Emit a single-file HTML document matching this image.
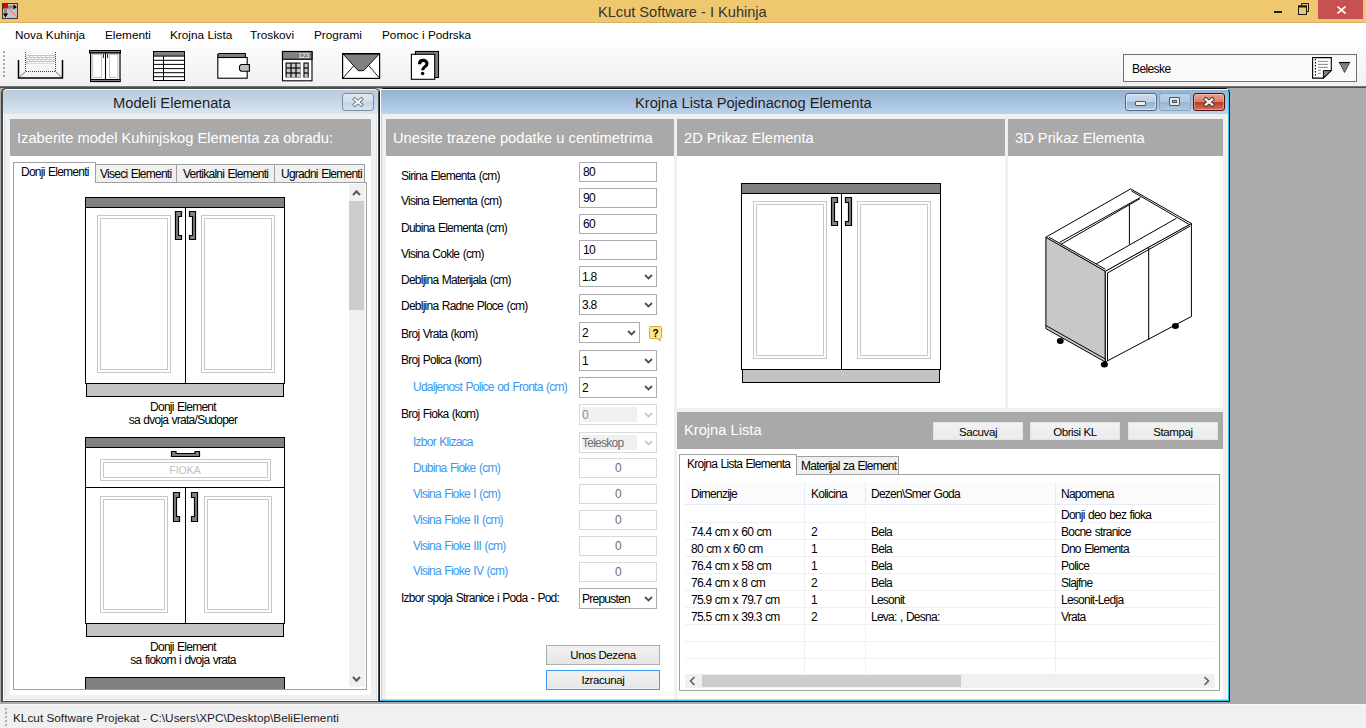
<!DOCTYPE html>
<html><head><meta charset="utf-8">
<style>
*{margin:0;padding:0;box-sizing:border-box}
html,body{width:1366px;height:728px;overflow:hidden;background:#ababab;font-family:"Liberation Sans",sans-serif;position:relative}
.a{position:absolute}
.t{position:absolute;white-space:pre;line-height:1}
.ms{font-size:12px;letter-spacing:-0.75px;word-spacing:0.8px;color:#000}
.mi{font-size:11.8px;color:#000;top:30px}
.hdr{position:absolute;background:#a9a9a9}
.hdr span{position:absolute;white-space:pre;line-height:1;color:#fff;font-size:14.7px}
.tb{position:absolute;background:#fff;border:1px solid #abadb3;height:20px;width:78px}
.tb span{position:absolute;left:3px;top:3px}
.cb{position:absolute;background:#fff;border:1px solid #acacac;height:21px;width:78px}
.cb span{position:absolute;left:2px;top:4px}
.chev{position:absolute;right:3px;top:7px;width:9px;height:6px}
.dis{border-color:#d9d9d9}
.lbl{position:absolute;white-space:pre;line-height:1;font-size:12px;letter-spacing:-0.75px;word-spacing:0.8px;color:#000;left:401px}
.blu{color:#3898f0;left:413px}
.btn{position:absolute;border:1px solid #adadad;background:linear-gradient(#f2f2f2,#e5e5e5);text-align:center}
.btn span{position:absolute;left:0;right:0;white-space:pre;line-height:1;font-size:11.5px;letter-spacing:-0.4px}
</style></head><body>
<svg width="0" height="0" style="position:absolute"><defs>
<g id="cab2d">
    <rect x="0.5" y="0.5" width="199" height="10" fill="#808080" stroke="#000"/>
    <rect x="0.5" y="10.5" width="199" height="176" fill="#fff" stroke="#000"/>
    <rect x="1.5" y="186.5" width="197" height="13" fill="#c3c3c3" stroke="#000"/>
    <line x1="100.5" y1="10.5" x2="100.5" y2="186.5" stroke="#000"/>
    <rect x="12.5" y="18.5" width="73" height="157" fill="none" stroke="#c8c8c8"/>
    <rect x="15.5" y="21.5" width="67" height="151" fill="none" stroke="#c8c8c8"/>
    <rect x="116.5" y="18.5" width="73" height="157" fill="none" stroke="#c8c8c8"/>
    <rect x="119.5" y="21.5" width="67" height="151" fill="none" stroke="#c8c8c8"/>
    <path d="M90.5 14.5H96.5V19.5H93.5V38.5H96.5V42.5H90.5Z" fill="#808080" stroke="#000" stroke-width="1.2"/>
    <path d="M110.5 14.5H104.5V19.5H107.5V38.5H104.5V42.5H110.5Z" fill="#808080" stroke="#000" stroke-width="1.2"/>
</g></defs></svg>

<!-- ===== TITLE BAR ===== -->
<div class="a" style="left:0;top:0;width:1366px;height:23px;background:#efc76e;border-bottom:1px solid #d8b061"></div>
<svg class="a" style="left:2px;top:3px" width="16" height="16" viewBox="0 0 16 16">
  <rect x="0.5" y="0.5" width="15" height="15" fill="#c4c4c4" stroke="#3a3a3a"/>
  <rect x="1" y="1" width="5" height="4.5" fill="#e80000"/>
  <rect x="1" y="1" width="1" height="4.5" fill="#800080"/>
  <path d="M6 4.5L15 14.5" stroke="#ff5050" stroke-width="0.8"/>
  <rect x="6" y="2.5" width="6" height="3" fill="#8a8a8a"/>
  <path d="M11.5 1.5L15 4L11.5 6.5Z" fill="#000"/>
  <rect x="2" y="5.5" width="3" height="6" fill="#8a8a8a"/>
  <path d="M1 10.5L3.5 14.5L6 10.5Z" fill="#000"/>
</svg>
<div class="t" style="left:598px;top:5px;font-size:14.6px;color:#333">KLcut Software - I Kuhinja</div>
<div class="a" style="left:1274px;top:11px;width:8px;height:2px;background:#1a1a1a"></div>
<svg class="a" style="left:1298px;top:3px" width="12" height="12" viewBox="0 0 12 12">
  <path d="M3.5 2.5V0.5H10.5V8.5H8.5" fill="none" stroke="#1a1a1a" stroke-width="1"/>
  <rect x="0.5" y="3" width="8" height="8.5" fill="none" stroke="#1a1a1a" stroke-width="1"/>
  <rect x="0" y="2.5" width="9" height="2" fill="#1a1a1a"/>
</svg>
<div class="a" style="left:1318px;top:0;width:45px;height:19px;background:#c75050"></div>
<svg class="a" style="left:1337px;top:6px" width="9" height="8" viewBox="0 0 9 8">
  <path d="M0.5 0.5L8.5 7.5M8.5 0.5L0.5 7.5" stroke="#fff" stroke-width="1.6"/>
</svg>

<!-- ===== MENU ===== -->
<div class="a" style="left:0;top:23px;width:1366px;height:24px;background:#fff"></div>
<div class="t mi" style="left:15px">Nova Kuhinja</div>
<div class="t mi" style="left:105px">Elementi</div>
<div class="t mi" style="left:170px">Krojna Lista</div>
<div class="t mi" style="left:250px">Troskovi</div>
<div class="t mi" style="left:314px">Programi</div>
<div class="t mi" style="left:382px">Pomoc i Podrska</div>

<!-- ===== TOOLBAR ===== -->
<div class="a" style="left:0;top:47px;width:1366px;height:39px;background:linear-gradient(#fbfbfb,#f6f6f6 50%,#f0f0f0)"></div>
<div class="a" style="left:0;top:86px;width:1366px;height:2px;background:linear-gradient(#8a8a8a,#3a3a3a)"></div>
<!-- grip -->
<svg class="a" style="left:3px;top:50px" width="3" height="28" viewBox="0 0 3 28"><g fill="#a8a8a8"><rect x="0" y="1" width="2" height="2"/><rect x="0" y="5" width="2" height="2"/><rect x="0" y="9" width="2" height="2"/><rect x="0" y="13" width="2" height="2"/><rect x="0" y="17" width="2" height="2"/><rect x="0" y="21" width="2" height="2"/><rect x="0" y="25" width="2" height="2"/></g></svg>
<svg class="a" style="left:0;top:47px" width="470" height="38" viewBox="0 47 470 38">
  <!-- icon1 room -->
  <rect x="26" y="55" width="29.5" height="8.6" fill="#c4c4c4"/>
  <g stroke="#fff" stroke-width="1" stroke-dasharray="3.2 0.8">
    <line x1="26" y1="56.5" x2="55.5" y2="56.5"/>
    <line x1="27.5" y1="58.5" x2="55.5" y2="58.5"/>
    <line x1="26" y1="60.5" x2="55.5" y2="60.5"/>
    <line x1="27.5" y1="62.5" x2="55.5" y2="62.5"/>
  </g>
  <g stroke="#404040" stroke-width="1" stroke-dasharray="1 1" fill="none">
    <path d="M25.5 52V71.5H55.5V52"/>
  </g>
  <path d="M19.5 77L25.5 71.5M61.5 77L55.5 71.5" stroke="#555" stroke-width="0.8"/>
  <path d="M18.5 60V78H62.5V60" fill="none" stroke="#000" stroke-width="1.5"/>
  <!-- icon2 cabinet -->
  <rect x="89.5" y="50.5" width="31" height="2.5" fill="#808080" stroke="#000" stroke-width="1"/>
  <rect x="90.6" y="53" width="29.4" height="28.5" fill="#fff" stroke="#000" stroke-width="1.2"/>
  <rect x="90.6" y="79.5" width="29.4" height="2" fill="#808080" stroke="#000" stroke-width="1"/>
  <line x1="105.5" y1="53" x2="105.5" y2="79.5" stroke="#000" stroke-width="1.1"/>
  <rect x="92.7" y="54.5" width="8.8" height="23" fill="none" stroke="#c4c4c4" stroke-width="1"/>
  <rect x="109.5" y="54.5" width="8.3" height="23" fill="none" stroke="#c4c4c4" stroke-width="1"/>
  <line x1="103.4" y1="54" x2="103.4" y2="58" stroke="#000" stroke-width="0.9"/>
  <line x1="107.6" y1="54" x2="107.6" y2="58" stroke="#000" stroke-width="0.9"/>
  <!-- icon3 table -->
  <rect x="153.5" y="51.5" width="31" height="29" fill="#fff" stroke="#000" stroke-width="1"/>
  <rect x="153.5" y="51.5" width="31" height="4.6" fill="#808080" stroke="#000" stroke-width="1"/>
  <g stroke="#000" stroke-width="1">
    <line x1="153.5" y1="60.3" x2="184.5" y2="60.3"/>
    <line x1="153.5" y1="64.4" x2="184.5" y2="64.4"/>
    <line x1="153.5" y1="68.6" x2="184.5" y2="68.6"/>
    <line x1="153.5" y1="72.7" x2="184.5" y2="72.7"/>
    <line x1="153.5" y1="76.7" x2="184.5" y2="76.7"/>
    <line x1="163.5" y1="56" x2="163.5" y2="80.5"/>
  </g>
  <!-- icon4 wallet -->
  <path d="M217.8 57.5V54.6L219 53.5H245.4V57.5" fill="#808080" stroke="#000" stroke-width="1.1"/>
  <rect x="217.8" y="57.5" width="29.4" height="20.7" fill="#fff" stroke="#000" stroke-width="1.1"/>
  <path d="M241 64.5H249.4V71.2H241L239.5 69.5V66.2Z" fill="#c0c0c0" stroke="#000" stroke-width="1.1"/>
  <!-- icon5 calculator -->
  <rect x="282.5" y="51.5" width="29.5" height="29.3" fill="#fff" stroke="#000" stroke-width="1.1"/>
  <rect x="282.5" y="51.5" width="29.5" height="7.8" fill="#808080" stroke="#000" stroke-width="1.1"/>
  <text x="309" y="58.2" font-family="Liberation Sans" font-size="7" fill="#fff" text-anchor="end" letter-spacing="-0.3">123</text>
  <rect x="285.5" y="62.5" width="15" height="15" fill="#000"/>
  <rect x="303.4" y="62.5" width="5.3" height="15" fill="#000"/>
  <g fill="#c8c8c8">
    <rect x="286.6" y="63.6" width="3.8" height="3.8"/><rect x="291.6" y="63.6" width="3.8" height="3.8"/><rect x="296.6" y="63.6" width="3.8" height="3.8"/>
    <rect x="286.6" y="68.6" width="3.8" height="3.8"/><rect x="291.6" y="68.6" width="3.8" height="3.8"/><rect x="296.6" y="68.6" width="3.8" height="3.8"/>
    <rect x="286.6" y="73.6" width="3.8" height="3.8"/><rect x="291.6" y="73.6" width="3.8" height="3.8"/><rect x="296.6" y="73.6" width="3.8" height="3.8"/>
    <rect x="304.5" y="63.6" width="3.2" height="3.8"/><rect x="304.5" y="68.6" width="3.2" height="3.8"/><rect x="304.5" y="73.6" width="3.2" height="3.8"/>
  </g>
  <!-- icon6 envelope -->
  <rect x="342.6" y="53.6" width="37" height="24.8" fill="#fff" stroke="#000" stroke-width="1.2"/>
  <path d="M343.2 54.2H379L363.6 70.7H358.2Z" fill="#808080" stroke="#000" stroke-width="0.9"/>
  <path d="M343 78L353.5 66M379.5 78L369 66" stroke="#000" stroke-width="0.9"/>
  <!-- icon7 help -->
  <rect x="415.5" y="51.5" width="23" height="26" fill="#808080" stroke="#000" stroke-width="1.1"/>
  <rect x="411.4" y="54.3" width="23.3" height="25" fill="#fff" stroke="#000" stroke-width="1.1"/>
  <path d="M419.5 64.3C419.5 61.8 421.2 60.4 423.3 60.4C425.5 60.4 427 61.9 427 63.8C427 66.3 423.3 66.8 422.8 69.5V70.3" fill="none" stroke="#000" stroke-width="3.1"/><circle cx="422.6" cy="73.5" r="1.8" fill="#000"/>
</svg>
<!-- Beleske -->
<div class="a" style="left:1123px;top:54px;width:234px;height:28px;border:1px solid #707070;background:#f9f9f9"></div>
<div class="t" style="left:1132px;top:63px;font-size:12px;letter-spacing:-0.6px;color:#000">Beleske</div>
<svg class="a" style="left:1310px;top:55px" width="45" height="26" viewBox="1310 55 45 26">
  <path d="M1312.6 57.6H1331.3V70.6L1323.4 78.1H1312.6Z" fill="#fff" stroke="#000" stroke-width="1.1"/>
  <path d="M1323.4 78.1V70.6H1331.3Z" fill="#808080" stroke="#000" stroke-width="1"/>
  <line x1="1315.4" y1="59" x2="1315.4" y2="77" stroke="#000" stroke-width="1.1" stroke-dasharray="1.6 1.4"/>
  <g stroke="#808080" stroke-width="0.9"><line x1="1318" y1="61.4" x2="1328" y2="61.4"/><line x1="1318" y1="64.4" x2="1328" y2="64.4"/><line x1="1318" y1="67.4" x2="1328" y2="67.4"/><line x1="1318" y1="70.4" x2="1321" y2="70.4"/><line x1="1318" y1="73.4" x2="1321" y2="73.4"/></g>
  <path d="M1339.3 62.4H1349.8L1344.5 72.6Z" fill="#808080" stroke="#000" stroke-width="0.9" stroke-dasharray="1.2 0.8"/><line x1="1339" y1="62.6" x2="1350" y2="62.6" stroke="#000" stroke-width="1.1"/>
</svg>


<!-- ===== STATUS ===== -->
<div class="a" style="left:0;top:704px;width:1366px;height:1px;background:#f8f8f8"></div><div class="a" style="left:0;top:705px;width:1366px;height:23px;background:#f0f0f0"></div>
<svg class="a" style="left:4px;top:706px" width="4" height="20" viewBox="0 0 4 20"><g stroke="#a0a0a0" stroke-width="1.2"><path d="M1 4L3 2M1 8L3 6M1 12L3 10M1 16L3 14M1 20L3 18"/></g></svg>
<div class="t" style="left:13px;top:713px;font-size:11.8px;color:#1a1a2a">KLcut Software Projekat - C:\Users\XPC\Desktop\BeliElementi</div>

<!-- ===== LEFT WINDOW ===== -->
<div class="a" style="left:1px;top:88px;width:378px;height:614px;background:#4a4a4a;border-radius:5px 5px 0 0"></div>
<div class="a" style="left:3px;top:89px;width:375px;height:612px;background:#fff;border-radius:4px 4px 0 0"></div>
<div class="a" style="left:4px;top:114px;width:373px;height:586px;background:#d5e3f1"></div>
<div class="a" style="left:5px;top:114px;width:371px;height:585px;background:#f0f0f0"></div>
<div class="a" style="left:3px;top:90px;width:375px;height:24px;background:linear-gradient(#b8c9da,#d8e5f2);border-radius:4px 4px 0 0"></div>
<div class="t" style="left:113px;top:96px;font-size:14.7px;color:#1e1e1e">Modeli Elemenata</div>
<div class="a" style="left:342px;top:93px;width:32px;height:18px;border:1px solid #7d8ea3;border-radius:3px;background:linear-gradient(#dfe8f1,#d2dfec 48%,#c4d4e6 52%,#d6e3f0)"></div>
<svg class="a" style="left:351px;top:96px" width="14" height="12" viewBox="0 0 14 12"><path d="M3.8 3.3L10.2 8.7M10.2 3.3L3.8 8.7" stroke="#5a6270" stroke-width="3.6" stroke-linecap="square"/><path d="M3.8 3.3L10.2 8.7M10.2 3.3L3.8 8.7" stroke="#f6f6f6" stroke-width="2.1" stroke-linecap="square"/></svg>

<div class="hdr" style="left:10px;top:119px;width:361px;height:37px"><span style="left:7px;top:12px">Izaberite model Kuhinjskog Elementa za obradu:</span></div>
<div class="a" style="left:10px;top:156px;width:361px;height:539px;background:#fff"></div>
<!-- tab page -->
<div class="a" style="left:13px;top:182px;width:354px;height:508px;border:1px solid #a0a0a0;background:#fff"></div>
<!-- tabs -->
<div class="a" style="left:95px;top:164px;width:82px;height:18px;border:1px solid #a0a0a0;border-bottom:none;background:#f0f0f0"></div>
<div class="a" style="left:176px;top:164px;width:99px;height:18px;border:1px solid #a0a0a0;border-bottom:none;background:#f0f0f0"></div>
<div class="a" style="left:274px;top:164px;width:91px;height:18px;border:1px solid #a0a0a0;border-bottom:none;background:#f0f0f0"></div>
<div class="a" style="left:13px;top:162px;width:83px;height:21px;border:1px solid #a0a0a0;border-bottom:none;background:#fff"></div>
<div class="t ms" style="left:21px;top:166px">Donji Elementi</div>
<div class="t ms" style="left:100px;top:168px">Viseci Elementi</div>
<div class="t ms" style="left:183px;top:168px">Vertikalni Elementi</div>
<div class="t ms" style="left:281px;top:168px">Ugradni Elementi</div>
<!-- scrollbar -->
<div class="a" style="left:349px;top:184px;width:16px;height:503px;background:#f0f0f0"></div>
<div class="a" style="left:349px;top:201px;width:15px;height:109px;background:#cdcdcd"></div>
<svg class="a" style="left:352px;top:189px" width="9" height="8" viewBox="0 0 9 8"><path d="M1 6.2L4.5 2.3L8 6.2" fill="none" stroke="#555" stroke-width="2"/></svg>
<svg class="a" style="left:352px;top:675px" width="9" height="8" viewBox="0 0 9 8"><path d="M1 1.8L4.5 5.7L8 1.8" fill="none" stroke="#555" stroke-width="2"/></svg>
<!-- cabinets -->
<svg class="a" style="left:14px;top:183px" width="335" height="506" viewBox="0 0 335 506">
  <use href="#cab2d" x="71" y="14"/>
  <g transform="translate(71,254)">
    <rect x="0.5" y="0.5" width="199" height="10" fill="#808080" stroke="#000"/>
    <rect x="0.5" y="10.5" width="199" height="176" fill="#fff" stroke="#000"/>
    <rect x="1.5" y="186.5" width="197" height="13" fill="#c3c3c3" stroke="#000"/>
    <line x1="0.5" y1="50.5" x2="199.5" y2="50.5" stroke="#000"/>
    <line x1="100.5" y1="50.5" x2="100.5" y2="186.5" stroke="#000"/>
    <path d="M86.5 14.5H91V16.5H110V14.5H114.5V19.5H86.5Z" fill="#808080" stroke="#000" stroke-width="1.2"/>
    <rect x="15.5" y="22.5" width="170" height="21" fill="none" stroke="#c8c8c8"/>
    <rect x="18.5" y="25.5" width="164" height="15" fill="none" stroke="#c8c8c8"/>
    <text x="100" y="37" font-family="Liberation Sans" font-size="10.5" fill="#c0c0c0" text-anchor="middle">FIOKA</text>
    <rect x="15.5" y="59.5" width="67" height="116" fill="none" stroke="#c8c8c8"/>
    <rect x="18.5" y="62.5" width="61" height="110" fill="none" stroke="#c8c8c8"/>
    <rect x="119.5" y="59.5" width="67" height="116" fill="none" stroke="#c8c8c8"/>
    <rect x="122.5" y="62.5" width="61" height="110" fill="none" stroke="#c8c8c8"/>
    <path d="M88.5 55.5H94.5V60.5H91.5V79.5H94.5V84.5H88.5Z" fill="#808080" stroke="#000" stroke-width="1.2"/>
    <path d="M112.5 55.5H106.5V60.5H109.5V79.5H106.5V84.5H112.5Z" fill="#808080" stroke="#000" stroke-width="1.2"/>
  </g>
  <rect x="71.5" y="494.5" width="199" height="20" fill="#808080" stroke="#000"/>
</svg>
<div class="t ms" style="left:83px;width:200px;text-align:center;top:401px">Donji Element</div>
<div class="t ms" style="left:83px;width:200px;text-align:center;top:414px">sa dvoja vrata/Sudoper</div>
<div class="t ms" style="left:83px;width:200px;text-align:center;top:641px">Donji Element</div>
<div class="t ms" style="left:83px;width:200px;text-align:center;top:654px">sa fiokom i dvoja vrata</div>


<!-- ===== RIGHT WINDOW ===== -->
<div class="a" style="left:379px;top:88px;width:851px;height:614px;background:#111;border-radius:5px 5px 0 0"></div>
<div class="a" style="left:380px;top:89px;width:849px;height:612px;background:#34c6ee;border-radius:4px 4px 0 0"></div>
<div class="a" style="left:380px;top:89px;width:1px;height:611px;background:#fff"></div>
<div class="a" style="left:381px;top:114px;width:847px;height:586px;background:#b9d1ea"></div>
<div class="a" style="left:382px;top:114px;width:846px;height:585px;background:#f0f0f0"></div>
<div class="a" style="left:381px;top:89px;width:847px;height:1px;background:#fff"></div>
<div class="a" style="left:381px;top:90px;width:847px;height:24px;background:linear-gradient(#94b2d3,#bad3ec)"></div>
<div class="t" style="left:635px;top:96px;font-size:14.7px;color:#1e1e1e">Krojna Lista Pojedinacnog Elementa</div>
<!-- title buttons -->
<div class="a" style="left:1125px;top:93px;width:32px;height:18px;border:1px solid #56667c;border-radius:3px;background:linear-gradient(#cddcec,#bccfe4 48%,#97b3d1 52%,#b4cce5);box-shadow:inset 0 0 0 1px rgba(255,255,255,0.5)"></div>
<div class="a" style="left:1135px;top:101px;width:11px;height:5px;background:#f0f0f0;border:1px solid #4a5566;border-radius:1px"></div>
<div class="a" style="left:1159px;top:93px;width:32px;height:18px;border:1px solid #8aa4c0;border-radius:3px;background:linear-gradient(#bcd0e6,#b0c8e0 48%,#9ab6d4 52%,#b0cae4)"></div>
<div class="a" style="left:1169px;top:97px;width:11px;height:9px;background:#e8e8e8;border:1px solid #4a5566;border-radius:1px"></div>
<div class="a" style="left:1172px;top:100px;width:5px;height:3px;background:#9ab0c8;border:1px solid #4a5566"></div>
<div class="a" style="left:1193px;top:93px;width:32px;height:18px;border:1px solid #4a1016;border-radius:3px;background:linear-gradient(#eba593,#d97c66 48%,#b83c22 52%,#d0735a);box-shadow:inset 0 0 0 1px rgba(255,200,190,0.5)"></div>
<svg class="a" style="left:1202px;top:96px" width="14" height="12" viewBox="0 0 14 12"><path d="M3.8 3.3L10.2 8.7M10.2 3.3L3.8 8.7" stroke="#3a2a2a" stroke-width="3.8" stroke-linecap="square"/><path d="M3.8 3.3L10.2 8.7M10.2 3.3L3.8 8.7" stroke="#f4f4f4" stroke-width="2.3" stroke-linecap="square"/></svg>

<!-- headers -->
<div class="hdr" style="left:386px;top:119px;width:288px;height:37px"><span style="left:7px;top:12px">Unesite trazene podatke u centimetrima</span></div>
<div class="hdr" style="left:677px;top:119px;width:328px;height:37px"><span style="left:7px;top:12px">2D Prikaz Elementa</span></div>
<div class="hdr" style="left:1008px;top:119px;width:215px;height:37px"><span style="left:7px;top:12px">3D Prikaz Elementa</span></div>
<div class="a" style="left:386px;top:156px;width:288px;height:543px;background:#fff"></div>
<div class="a" style="left:677px;top:156px;width:328px;height:252px;background:#fff"></div>
<div class="a" style="left:1008px;top:156px;width:215px;height:252px;background:#fff"></div>
<div class="hdr" style="left:677px;top:412px;width:546px;height:37px"><span style="left:7px;top:11px">Krojna Lista</span></div>
<div class="a" style="left:677px;top:449px;width:546px;height:250px;background:#fff"></div>

<!-- form labels -->
<div class="lbl" style="top:170px">Sirina Elementa (cm)</div>
<div class="lbl" style="top:195px">Visina Elementa (cm)</div>
<div class="lbl" style="top:222px">Dubina Elementa (cm)</div>
<div class="lbl" style="top:248px">Visina Cokle (cm)</div>
<div class="lbl" style="top:274px">Debljina Materijala (cm)</div>
<div class="lbl" style="top:300px">Debljina Radne Ploce (cm)</div>
<div class="lbl" style="top:328px">Broj Vrata (kom)</div>
<div class="lbl" style="top:354px">Broj Polica (kom)</div>
<div class="lbl blu" style="top:381px">Udaljenost Police od Fronta (cm)</div>
<div class="lbl" style="top:408px">Broj Fioka (kom)</div>
<div class="lbl blu" style="top:436px">Izbor Klizaca</div>
<div class="lbl blu" style="top:462px">Dubina Fioke (cm)</div>
<div class="lbl blu" style="top:488px">Visina Fioke I (cm)</div>
<div class="lbl blu" style="top:514px">Visina Fioke II (cm)</div>
<div class="lbl blu" style="top:540px">Visina Fioke III (cm)</div>
<div class="lbl blu" style="top:565px">Visina Fioke IV (cm)</div>
<div class="lbl" style="top:592px">Izbor spoja Stranice i Poda - Pod:</div>

<!-- inputs -->
<div class="tb" style="left:579px;top:162px"><span class="t ms">80</span></div>
<div class="tb" style="left:579px;top:188px"><span class="t ms">90</span></div>
<div class="tb" style="left:579px;top:214px"><span class="t ms">60</span></div>
<div class="tb" style="left:579px;top:240px"><span class="t ms">10</span></div>
<div class="cb" style="left:579px;top:266px"><span class="t ms">1.8</span><svg class="chev" viewBox="0 0 9 6"><path d="M1 1L4.5 4.5L8 1" fill="none" stroke="#505050" stroke-width="1.8"/></svg></div>
<div class="cb" style="left:579px;top:294px"><span class="t ms">3.8</span><svg class="chev" viewBox="0 0 9 6"><path d="M1 1L4.5 4.5L8 1" fill="none" stroke="#505050" stroke-width="1.8"/></svg></div>
<div class="cb" style="left:579px;top:322px;width:61px"><span class="t ms">2</span><svg class="chev" viewBox="0 0 9 6"><path d="M1 1L4.5 4.5L8 1" fill="none" stroke="#505050" stroke-width="1.8"/></svg></div>
<svg class="a" style="left:649px;top:326px" width="13" height="16" viewBox="0 0 13 16">
  <path d="M1.5 0.5H11.5Q12.5 0.5 12.5 1.5V11.5Q12.5 12.5 11.5 12.5H10.5L11.5 15L8 12.5H1.5Q0.5 12.5 0.5 11.5V1.5Q0.5 0.5 1.5 0.5Z" fill="#fbe98a" stroke="#d8a640"/>
  <text x="6.5" y="10.5" font-family="Liberation Sans" font-size="10" font-weight="bold" text-anchor="middle" fill="#000">?</text>
</svg>
<div class="cb" style="left:579px;top:350px"><span class="t ms">1</span><svg class="chev" viewBox="0 0 9 6"><path d="M1 1L4.5 4.5L8 1" fill="none" stroke="#505050" stroke-width="1.8"/></svg></div>
<div class="cb" style="left:579px;top:377px"><span class="t ms">2</span><svg class="chev" viewBox="0 0 9 6"><path d="M1 1L4.5 4.5L8 1" fill="none" stroke="#505050" stroke-width="1.8"/></svg></div>
<div class="cb dis" style="left:579px;top:404px"><div class="a" style="left:2px;top:2px;width:55px;height:15px;background:#f0f0f0"></div><span class="t ms" style="color:#8d8d8d">0</span><svg class="chev" viewBox="0 0 9 6"><path d="M1 1L4.5 4.5L8 1" fill="none" stroke="#bfbfbf" stroke-width="1.6"/></svg></div>
<div class="cb dis" style="left:579px;top:432px"><div class="a" style="left:2px;top:2px;width:55px;height:15px;background:#f0f0f0"></div><span class="t ms" style="color:#6d6d6d">Teleskop</span><svg class="chev" viewBox="0 0 9 6"><path d="M1 1L4.5 4.5L8 1" fill="none" stroke="#bfbfbf" stroke-width="1.6"/></svg></div>
<div class="tb dis" style="left:579px;top:458px"><span class="t ms" style="left:0;right:0;text-align:center;color:#6d6d6d">0</span></div>
<div class="tb dis" style="left:579px;top:484px"><span class="t ms" style="left:0;right:0;text-align:center;color:#6d6d6d">0</span></div>
<div class="tb dis" style="left:579px;top:510px"><span class="t ms" style="left:0;right:0;text-align:center;color:#6d6d6d">0</span></div>
<div class="tb dis" style="left:579px;top:536px"><span class="t ms" style="left:0;right:0;text-align:center;color:#6d6d6d">0</span></div>
<div class="tb dis" style="left:579px;top:562px"><span class="t ms" style="left:0;right:0;text-align:center;color:#6d6d6d">0</span></div>
<div class="cb" style="left:579px;top:588px"><span class="t ms">Prepusten</span><svg class="chev" viewBox="0 0 9 6"><path d="M1 1L4.5 4.5L8 1" fill="none" stroke="#505050" stroke-width="1.8"/></svg></div>

<div class="btn" style="left:546px;top:645px;width:114px;height:20px"><span style="top:4px">Unos Dezena</span></div>
<div class="btn" style="left:546px;top:670px;width:114px;height:20px;border-color:#3d9cf7;box-shadow:inset 0 0 0 1px #e6f0fa"><span style="top:4px">Izracunaj</span></div>

<!-- 2D cabinet -->
<svg class="a" style="left:741px;top:183px" width="201" height="201" viewBox="0 0 201 201"><use href="#cab2d"/></svg>

<!-- 3D cabinet -->
<svg class="a" style="left:1030px;top:180px" width="175" height="195" viewBox="0 0 175 195">
  <g stroke="#000" stroke-width="1" stroke-linejoin="round" fill="none">
    <polygon points="15.9,57.2 75.3,91.2 75.3,182 15.9,148.6" fill="#c8c8c8"/>
    <polygon points="75.3,91.2 161.4,43.5 161.4,136.5 75.3,182" fill="#fff"/>
    <polygon points="15.9,57.2 100.7,8.9 161.4,43.5 75.3,91.2" fill="#fff"/>
    <line x1="19" y1="57.2" x2="75.3" y2="89.2"/>
    <line x1="101.4" y1="10.9" x2="158.8" y2="44.2"/>
    <line x1="77.3" y1="93.1" x2="160.1" y2="46.1"/>
    <line x1="29.6" y1="62.4" x2="110.5" y2="17.4"/>
    <line x1="30.9" y1="64.4" x2="109.9" y2="18.7"/>
    <line x1="99.4" y1="24.6" x2="99.4" y2="64.4"/>
    <line x1="66.1" y1="84" x2="146.4" y2="38.3"/>
    <line x1="77.5" y1="93" x2="77.5" y2="181"/>
    <line x1="118.7" y1="67.7" x2="118.7" y2="160"/>
    <line x1="15.9" y1="145.5" x2="75.3" y2="179"/>
  </g>
  <ellipse cx="30.3" cy="161" rx="3.5" ry="3" fill="#000"/>
  <ellipse cx="74.4" cy="184.5" rx="3.5" ry="3" fill="#000"/>
  <ellipse cx="145.4" cy="146" rx="3.5" ry="3" fill="#000"/>
</svg>

<!-- krojna lista buttons -->
<div class="btn" style="left:933px;top:422px;width:90px;height:18px;border-color:#e3e3e3;background:linear-gradient(#f2f2f2,#ebebeb)"><span style="top:4px">Sacuvaj</span></div>
<div class="btn" style="left:1030px;top:422px;width:90px;height:18px;border-color:#e3e3e3;background:linear-gradient(#f2f2f2,#ebebeb)"><span style="top:4px">Obrisi KL</span></div>
<div class="btn" style="left:1128px;top:422px;width:90px;height:18px;border-color:#e3e3e3;background:linear-gradient(#f2f2f2,#ebebeb)"><span style="top:4px">Stampaj</span></div>

<!-- tab control -->
<div class="a" style="left:679px;top:474px;width:541px;height:217px;border:1px solid #a0a0a0;background:#fff"></div>
<div class="a" style="left:796px;top:456px;width:103px;height:18px;border:1px solid #a0a0a0;border-bottom:none;background:#f0f0f0"></div>
<div class="a" style="left:679px;top:454px;width:118px;height:21px;border:1px solid #a0a0a0;border-bottom:none;background:#fff"></div>
<div class="t ms" style="left:687px;top:458px">Krojna Lista Elementa</div>
<div class="t ms" style="left:801px;top:460px">Materijal za Element</div>

<!-- grid -->
<div class="a" style="left:685px;top:482px;width:530px;height:23px;background:#fbfbfb;border-bottom:1px solid #e3ecf7"></div>
<div class="a" style="left:685px;top:522px;width:530px;height:1px;background:#f0f0f0"></div>
<div class="a" style="left:685px;top:539px;width:530px;height:1px;background:#f0f0f0"></div>
<div class="a" style="left:685px;top:556px;width:530px;height:1px;background:#f0f0f0"></div>
<div class="a" style="left:685px;top:573px;width:530px;height:1px;background:#f0f0f0"></div>
<div class="a" style="left:685px;top:590px;width:530px;height:1px;background:#f0f0f0"></div>
<div class="a" style="left:685px;top:607px;width:530px;height:1px;background:#f0f0f0"></div>
<div class="a" style="left:685px;top:624px;width:530px;height:1px;background:#f0f0f0"></div>
<div class="a" style="left:685px;top:641px;width:530px;height:1px;background:#f0f0f0"></div>
<div class="a" style="left:685px;top:658px;width:530px;height:1px;background:#f0f0f0"></div>
<div class="a" style="left:804px;top:482px;width:1px;height:23px;background:#e3ecf7"></div>
<div class="a" style="left:804px;top:505px;width:1px;height:168px;background:#f0f0f0"></div>
<div class="a" style="left:865px;top:482px;width:1px;height:23px;background:#e3ecf7"></div>
<div class="a" style="left:865px;top:505px;width:1px;height:168px;background:#f0f0f0"></div>
<div class="a" style="left:1055px;top:482px;width:1px;height:23px;background:#e3ecf7"></div>
<div class="a" style="left:1055px;top:505px;width:1px;height:168px;background:#f0f0f0"></div>
<div class="t ms" style="left:691px;top:488px">Dimenzije</div>
<div class="t ms" style="left:811px;top:488px">Kolicina</div>
<div class="t ms" style="left:871px;top:488px">Dezen\Smer Goda</div>
<div class="t ms" style="left:1061px;top:488px">Napomena</div>
<div class="t ms" style="left:1061px;top:509px">Donji deo bez fioka</div>
<div class="t ms" style="left:691px;top:526px">74.4 cm x 60 cm</div>
<div class="t ms" style="left:811px;top:526px">2</div>
<div class="t ms" style="left:871px;top:526px">Bela</div>
<div class="t ms" style="left:1061px;top:526px">Bocne stranice</div>
<div class="t ms" style="left:691px;top:543px">80 cm x 60 cm</div>
<div class="t ms" style="left:811px;top:543px">1</div>
<div class="t ms" style="left:871px;top:543px">Bela</div>
<div class="t ms" style="left:1061px;top:543px">Dno Elementa</div>
<div class="t ms" style="left:691px;top:560px">76.4 cm x 58 cm</div>
<div class="t ms" style="left:811px;top:560px">1</div>
<div class="t ms" style="left:871px;top:560px">Bela</div>
<div class="t ms" style="left:1061px;top:560px">Police</div>
<div class="t ms" style="left:691px;top:577px">76.4 cm x 8 cm</div>
<div class="t ms" style="left:811px;top:577px">2</div>
<div class="t ms" style="left:871px;top:577px">Bela</div>
<div class="t ms" style="left:1061px;top:577px">Slajfne</div>
<div class="t ms" style="left:691px;top:594px">75.9 cm x 79.7 cm</div>
<div class="t ms" style="left:811px;top:594px">1</div>
<div class="t ms" style="left:871px;top:594px">Lesonit</div>
<div class="t ms" style="left:1061px;top:594px">Lesonit-Ledja</div>
<div class="t ms" style="left:691px;top:611px">75.5 cm x 39.3 cm</div>
<div class="t ms" style="left:811px;top:611px">2</div>
<div class="t ms" style="left:871px;top:611px">Leva: , Desna:</div>
<div class="t ms" style="left:1061px;top:611px">Vrata</div>

<!-- h scrollbar -->
<div class="a" style="left:685px;top:674px;width:530px;height:14px;background:#f0f0f0"></div>
<div class="a" style="left:702px;top:675px;width:259px;height:12px;background:#cdcdcd"></div>
<svg class="a" style="left:689px;top:676px" width="7" height="10" viewBox="0 0 7 10"><path d="M5.5 1L1.5 5L5.5 9" fill="none" stroke="#606060" stroke-width="1.6"/></svg>
<svg class="a" style="left:1203px;top:676px" width="7" height="10" viewBox="0 0 7 10"><path d="M1.5 1L5.5 5L1.5 9" fill="none" stroke="#606060" stroke-width="1.6"/></svg>

</body></html>
